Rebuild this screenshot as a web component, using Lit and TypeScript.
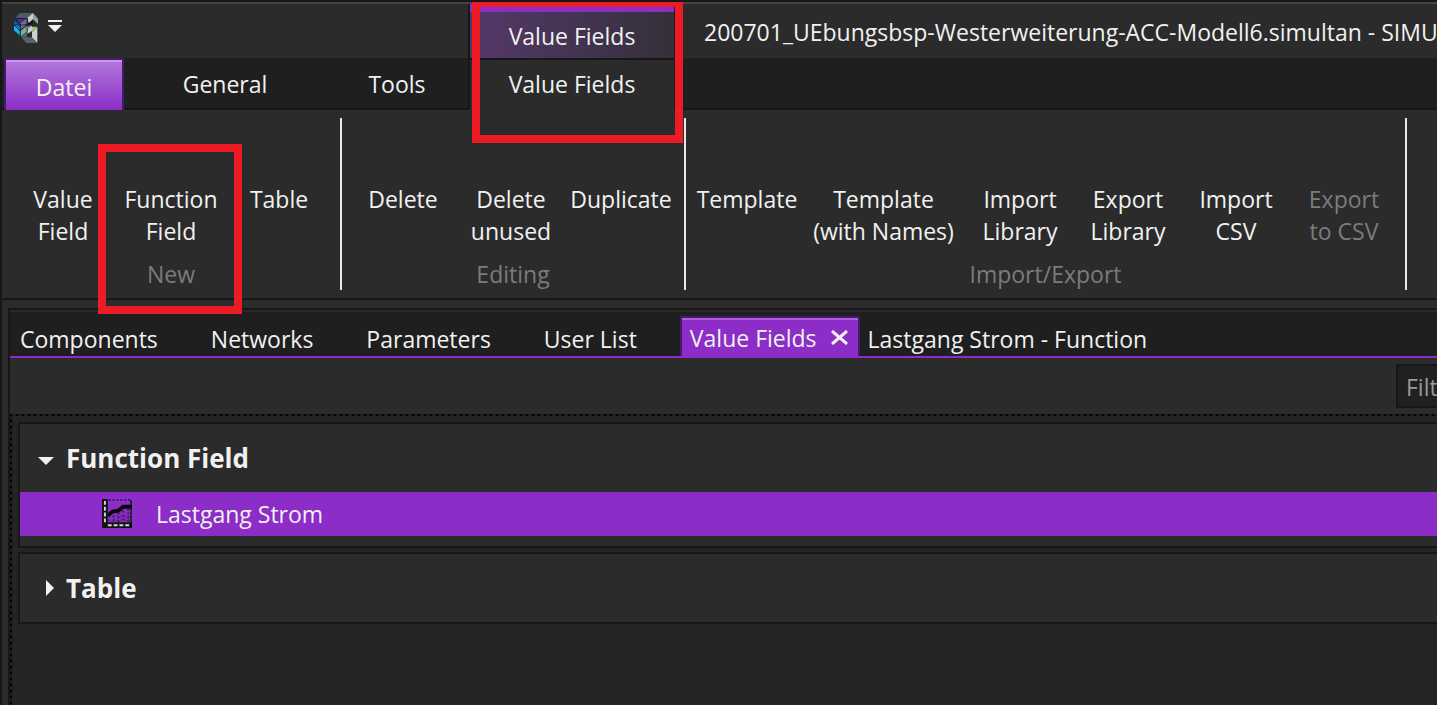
import { LitElement, html, css, svg, nothing } from "lit";
import { customElement, state } from "lit/decorators.js";
import { classMap } from "lit/directives/class-map.js";

interface Command {
  lines: string[];
  size?: "roomy" | "wide";
  disabled?: boolean;
}

interface CommandGroup {
  name: string;
  commands: Command[];
}

const GROUPS: CommandGroup[] = [
  {
    name: "New",
    commands: [{ lines: ["Value", "Field"] }, { lines: ["Function", "Field"] }, { lines: ["Table"] }],
  },
  {
    name: "Editing",
    commands: [
      { lines: ["Delete"] },
      { lines: ["Delete", "unused"] },
      { lines: ["Duplicate"], size: "roomy" },
    ],
  },
  {
    name: "Import/Export",
    commands: [
      { lines: ["Template"] },
      { lines: ["Template", "(with Names)"], size: "wide" },
      { lines: ["Import", "Library"] },
      { lines: ["Export", "Library"] },
      { lines: ["Import", "CSV"] },
      { lines: ["Export", "to CSV"], disabled: true },
    ],
  },
];

const DOCUMENTS = [
  "Components",
  "Networks",
  "Parameters",
  "User List",
  "Value Fields",
  "Lastgang Strom - Function",
];

const logo = svg`
  <svg class="logo" viewBox="0 0 72 90" aria-hidden="true">
    <path fill="#4f5b62" d="M18 0H57L42 15H4z"/>
    <path fill="#c6cccf" d="M57 0V18L44 31L40 15z"/>
    <path fill="#95a2a8" d="M57 0L72 17V33L57 19z"/>
    <path fill="#2d2358" d="M4 15H40V36H0V20z"/>
    <path fill="#7d62a6" d="M18 32L38 16V32L26 38z"/>
    <path fill="#4a3a86" d="M8 18H34L18 30z"/>
    <path fill="#0d5fa8" d="M0 22L18 36H0z"/>
    <path fill="#0a87cb" d="M0 36H18V54z"/>
    <path fill="#18b4ec" d="M0 36L18 54V68L0 52z"/>
    <path fill="#3d7f86" d="M20 36H38L20 52z"/>
    <path fill="#78b3a0" d="M38 38V56L20 70V54z"/>
    <path fill="#4f6f70" d="M20 70L38 56V72z"/>
    <path fill="#17191b" d="M40 32L56 22V38L40 48z"/>
    <path fill="#68757c" d="M26 42L54 36L42 48z"/>
    <path fill="#c9ced1" d="M42 46L54 38V54L40 62z"/>
    <path fill="#a6d06c" d="M54 41H70L54 56z"/>
    <path fill="#cdd2d4" d="M70 42V90L54 74V57z"/>
    <path fill="#56656c" d="M20 70L38 73H54L70 90H37z"/>
    <path fill="none" stroke="#16181a" stroke-width="2" d="M4 17H40V36H0M18 36V68M0 36L18 54L38 36"/>
  </svg>`;

const chart = svg`
  <svg class="chart" viewBox="0 0 32 32" aria-hidden="true">
    <path fill="none" stroke="#5b2488" stroke-width="2" stroke-dasharray="2 2"
      d="M7 18H30M7 22H30"/>
    <path fill="none" stroke="#3a1a58" stroke-width="2" stroke-dasharray="2 2"
      d="M7 1H31M12 17V25M17 14V25M22 12V25M27 10V25"/>
    <path fill="none" stroke="#2c2236" stroke-width="2" d="M30 1V30"/>
    <path fill="#131313" d="M0 0H6V24H31V30H0z"/>
    <path fill="none" stroke="#d4d4d4" stroke-width="2" stroke-dasharray="4 2" d="M3 2V26M6 27H30"/>
    <path fill="none" stroke="#080808" stroke-width="4" d="M6 17L11 13L17 12L22 8H31"/>
  </svg>`;

@customElement("app-root")
export class AppRoot extends LitElement {
  @state() private activeDocument = "Value Fields";
  @state() private functionsOpen = true;
  @state() private tablesOpen = false;

  static styles = css`
    :host {
      display: flex;
      flex-direction: column;
      position: relative;
      box-sizing: border-box;
      min-height: 100vh;
      overflow: hidden;
      border-left: 2px solid #171717;
      border-top: 2px solid #171717;
      background: #2b2b2b;
      color: #f1f1f1;
      font-family: "Open Sans", "Noto Sans", sans-serif;
      font-size: 23px;
      line-height: 32px;
    }
    button,
    input {
      box-sizing: border-box;
      margin: 0;
      padding: 0;
      border: 0;
      border-radius: 0;
      background: none;
      color: inherit;
      font: inherit;
      white-space: nowrap;
    }
    .header {
      display: grid;
      grid-template-columns: 466px 208px minmax(0, 1fr);
      grid-template-rows: 54px 52px;
      border-top: 2px solid #434343;
    }
    .quick {
      display: flex;
      align-items: flex-start;
      gap: 10px;
      padding: 9px 12px;
    }
    .logo {
      display: block;
      width: 24px;
      height: 30px;
    }
    .more {
      display: block;
      padding-top: 7px;
    }
    .more svg {
      display: block;
      width: 14px;
      height: 12px;
    }
    .context {
      border: solid #171717;
      border-width: 0 2px;
      background: linear-gradient(#8c2dc8, #8c2dc8) 0 0 / 100% 8px no-repeat,
        linear-gradient(90deg, #54386a, #34303a);
      padding-top: 16px;
      text-align: center;
    }
    .title {
      margin: 0;
      padding: 12px 0 0 28px;
      overflow: hidden;
      font-size: inherit;
      font-weight: 400;
      white-space: nowrap;
    }
    .tabs {
      display: grid;
      grid-template-columns: 120px 202px 1fr;
      padding-left: 2px;
      background: #1f1f1f;
      border-bottom: 2px solid #171717;
    }
    .file {
      height: 52px;
      padding-top: 4px;
      border: solid #47196a;
      border-width: 2px 2px 0;
      background: linear-gradient(#cb95f0, #cb95f0) 0 0 / 100% 2px no-repeat,
        linear-gradient(#b27adb, #8c2dc8);
    }
    .context-tab {
      padding-bottom: 2px;
      border: solid #171717;
      border-width: 2px 2px 0;
    }
    .tab-rest {
      background: #1f1f1f;
      border-bottom: 2px solid #171717;
    }
    .ribbon {
      display: flex;
      margin-bottom: 8px;
      padding: 8px 0;
      border-bottom: 2px solid #171717;
    }
    .group {
      display: flex;
      flex-direction: column;
      flex: none;
      padding: 65px 7px 0;
      border-right: 2px solid #e8e8e8;
    }
    .commands {
      display: flex;
      height: 75px;
    }
    .command {
      display: flex;
      flex-direction: column;
      align-items: center;
      width: 108px;
    }
    .command.roomy {
      width: 112px;
    }
    .command.wide {
      width: 165px;
    }
    .command:disabled {
      color: #7b7b7b;
    }
    .group-name {
      color: #7b7b7b;
      text-align: center;
    }
    .workspace {
      display: flex;
      flex-direction: column;
      flex: 1;
      margin-left: 6px;
      border: solid #171717;
      border-width: 2px 0 0 2px;
    }
    .documents {
      display: flex;
      height: 44px;
      padding-left: 2px;
      border-top: 2px solid #292929;
      border-bottom: 2px solid #8c2dc8;
      background: #1f1f1f;
    }
    .document {
      flex: none;
      padding: 10px 45px 0 8px;
    }
    .document.active {
      display: flex;
      margin: 4px 0 0 -2px;
      padding: 4px 10px 0 8px;
      gap: 14px;
      border: solid #47196a;
      border-width: 2px 2px 0;
      background: linear-gradient(#aa5fdd, #aa5fdd) 0 0 / 100% 2px no-repeat, #8c2dc8;
    }
    .cross {
      display: block;
      width: 17px;
      height: 15px;
      margin-top: 8px;
    }
    .toolbar {
      display: flex;
      justify-content: flex-end;
      padding: 6px 0;
    }
    .filter {
      width: 41px;
      height: 44px;
      padding: 2px 0 0 8px;
      border: solid #171717;
      border-width: 2px 0 2px 2px;
      background: #202020;
      outline: none;
    }
    .filter::placeholder {
      color: #999;
      opacity: 1;
    }
    .list {
      flex: 1;
      padding: 8px 0 8px 8px;
      background: repeating-linear-gradient(90deg, #000 0 2px, #1b1b1b 2px 6px) 0 0 / 100% 2px
          no-repeat,
        repeating-linear-gradient(#000 0 2px, #1b1b1b 2px 6px) 0 0 / 2px 100% no-repeat, #242424;
    }
    .section {
      margin-bottom: 4px;
      border: solid #171717;
      border-width: 2px 0 2px 2px;
      background: #2b2b2b;
    }
    .section-head {
      display: flex;
      align-items: center;
      gap: 12px;
      width: 100%;
      height: 68px;
      padding: 0 0 0 18px;
      font-size: 26px;
      font-weight: 700;
    }
    .arrow {
      width: 16px;
      height: 16px;
    }
    .items {
      margin: 0;
      padding: 0 0 10px;
      list-style: none;
    }
    .item {
      display: flex;
      align-items: center;
      gap: 23px;
      width: 100%;
      height: 44px;
      padding-left: 82px;
      background: #8c2dc8;
    }
    .chart {
      width: 31px;
      height: 31px;
    }
    .mark {
      position: absolute;
      box-sizing: border-box;
      border: 8px solid #ed1c24;
      pointer-events: none;
    }
    .mark-tabs {
      left: 470px;
      top: -3px;
      width: 211px;
      height: 144px;
    }
    .mark-function {
      left: 96px;
      top: 142px;
      width: 144px;
      height: 170px;
    }
  `;

  private section(name: string, open: boolean, toggle: () => void, items: string[]) {
    return html`<section class="section">
      <button class="section-head" aria-expanded=${open ? "true" : "false"} @click=${toggle}>
        <svg class="arrow" viewBox="0 0 16 16" aria-hidden="true">
          <path fill="#f1f1f1" d=${open ? "M0 7H16L8 15z" : "M8 0L16 8L8 16z"} />
        </svg>
        <span>${name}</span>
      </button>
      ${open
        ? html`<ul class="items">
            ${items.map((i) => html`<li><button class="item">${chart}<span>${i}</span></button></li>`)}
          </ul>`
        : nothing}
    </section>`;
  }

  render() {
    return html`
      <header class="header">
        <div class="quick">
          ${logo}
          <button class="more" aria-label="Customize">
            <svg viewBox="0 0 14 12" aria-hidden="true">
              <path fill="#f1f1f1" d="M0 0H14V2H0zM0 5H14L7 12z" />
            </svg>
          </button>
        </div>
        <div class="context">Value Fields</div>
        <h1 class="title">200701_UEbungsbsp-Westerweiterung-ACC-Modell6.simultan - SIMU</h1>
        <nav class="tabs">
          <button class="file">Datei</button>
          <button>General</button>
          <button>Tools</button>
        </nav>
        <button class="context-tab">Value Fields</button>
        <div class="tab-rest"></div>
      </header>

      <div class="ribbon">
        ${GROUPS.map(
          (g) => html`<div class="group">
            <div class="commands">
              ${g.commands.map(
                (c) => html`<button
                  class=${classMap({ command: true, roomy: c.size === "roomy", wide: c.size === "wide" })}
                  ?disabled=${c.disabled}
                >
                  ${c.lines.map((l) => html`<span>${l}</span>`)}
                </button>`,
              )}
            </div>
            <div class="group-name">${g.name}</div>
          </div>`,
        )}
      </div>

      <main class="workspace">
        <nav class="documents">
          ${DOCUMENTS.map((d) => {
            const active = d === this.activeDocument;
            return html`<button
              class=${classMap({ document: true, active })}
              @click=${() => (this.activeDocument = d)}
            >
              <span>${d}</span>
              ${active
                ? html`<svg class="cross" viewBox="0 0 17 15" aria-hidden="true">
                    <path fill="none" stroke="#f1f1f1" stroke-width="3" d="M1 1L16 14M16 1L1 14" />
                  </svg>`
                : nothing}
            </button>`;
          })}
        </nav>
        <div class="toolbar">
          <input class="filter" type="text" aria-label="Filter" placeholder="Filt" />
        </div>
        <div class="list">
          ${this.section("Function Field", this.functionsOpen, () => (this.functionsOpen = !this.functionsOpen), [
            "Lastgang Strom",
          ])}
          ${this.section("Table", this.tablesOpen, () => (this.tablesOpen = !this.tablesOpen), [])}
        </div>
      </main>

      <div class="mark mark-tabs"></div>
      <div class="mark mark-function"></div>
    `;
  }
}
